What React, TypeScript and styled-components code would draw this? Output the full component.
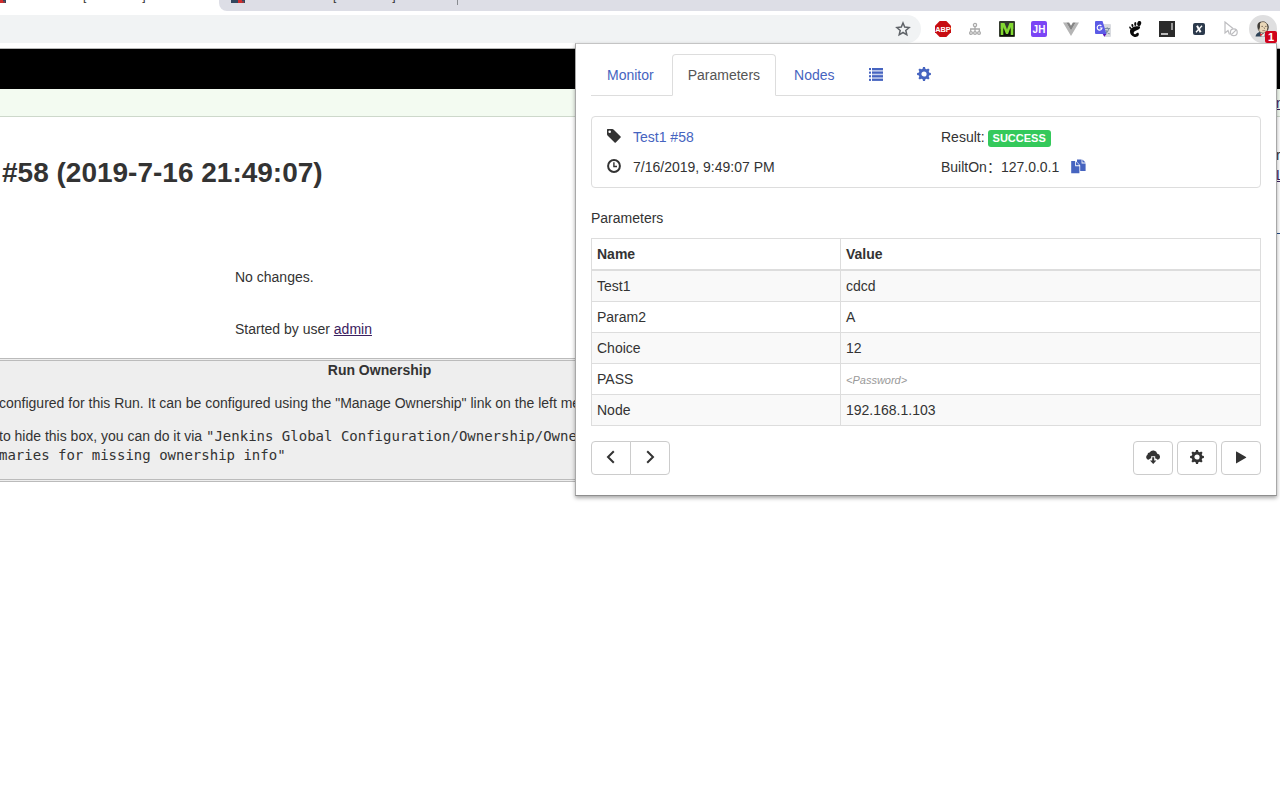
import React from 'react';
import styled, { createGlobalStyle, css } from 'styled-components';

const GlobalStyle = createGlobalStyle`
  *, *::before, *::after { box-sizing: border-box; }
  body {
    margin: 0;
    overflow: hidden;
    background: #fff;
    color: #333;
    font: 14px/20px "Liberation Sans", "Noto Sans CJK SC", sans-serif;
  }
`;

/* ---------- browser window ---------- */

const Browser = styled.div`
  position: relative;
  min-height: 100vh;
  overflow: hidden;
`;

const TabStrip = styled.div`
  display: flex;
  height: 11px;
  background: #fff;
`;

const BrowserTab = styled.div<{ $active?: boolean }>`
  display: flex;
  align-items: flex-end;
  height: 11px;
  padding: 0 0 8px 12px;
  overflow: hidden;
  font: 12px/14px "Liberation Sans", sans-serif;
  ${(p) =>
    p.$active
      ? css`
          flex: 0 0 219px;
          padding-left: 0;
          justify-content: flex-start;
        `
      : css`
          flex: 1;
          background: #dddee6;
          border-bottom-left-radius: 8px;
        `}
`;

const Favicon = styled.svg<{ $clipped?: boolean }>`
  flex: none;
  width: ${(p) => (p.$clipped ? 6 : 14)}px;
  height: 14px;
`;

const TabTitle = styled.span<{ $lead: number }>`
  display: flex;
  gap: 56px;
  padding-left: ${(p) => p.$lead}px;
`;

const TabDivider = styled.span`
  width: 1px;
  height: 12px;
  margin-left: 61px;
  margin-bottom: -2px;
  background: #888b90;
`;

const Toolbar = styled.div`
  display: flex;
  align-items: flex-start;
  gap: 8px;
  height: 38px;
  padding: 4px 3px 0 0;
  border-bottom: 1px solid #b6b6b6;
`;

const AddressBar = styled.div`
  display: flex;
  flex: 1;
  align-items: center;
  justify-content: flex-end;
  height: 28px;
  padding-right: 10px;
  background: #f1f3f4;
  border-radius: 0 14px 14px 0;
`;

const Extensions = styled.div`
  display: flex;
  gap: 4px;
`;

const plainButton = css`
  display: flex;
  align-items: center;
  justify-content: center;
  padding: 0;
  border: 0;
  background: none;
  color: inherit;
  font: inherit;
`;

const StarButton = styled.button`
  ${plainButton}
  width: 16px;
  height: 16px;
`;

const ExtensionButton = styled.button<{ $open?: boolean }>`
  ${plainButton}
  position: relative;
  width: 28px;
  height: 28px;
  border-radius: 50%;
  background: ${(p) => (p.$open ? '#dfdfe0' : 'none')};
`;

const Badge = styled.span`
  position: absolute;
  right: 0;
  bottom: 0;
  z-index: 2;
  width: 12px;
  height: 12px;
  border-radius: 2px;
  background: #d0021b;
  color: #fff;
  font: bold 11px/12px "Liberation Sans", sans-serif;
  text-align: center;
`;

/* ---------- Jenkins page ---------- */

const PageHeader = styled.header`
  height: 40px;
  background: #000;
`;

const Breadcrumbs = styled.nav`
  display: flex;
  align-items: center;
  justify-content: flex-end;
  height: 28px;
  background: #f3fbf1;
  border-bottom: 1px solid #cdd8cb;
`;

const Sliver = styled.span`
  display: block;
  width: 4px;
  overflow: hidden;
  white-space: nowrap;
`;

const PageLink = styled.a`
  color: #3b2160;
  text-decoration: underline;
`;

const BuildPage = styled.main`
  display: flex;
`;

const BuildBody = styled.div`
  flex: 1;
  min-width: 0;
`;

const SideColumn = styled.aside`
  flex: none;
  padding-top: 28px;
`;

const SideRule = styled.hr`
  width: 4px;
  height: 1px;
  margin: 48px 0 0;
  border: 0;
  background: #204a87;
`;

const BuildTitle = styled.h1`
  margin: 0;
  padding: 40px 0 0 2px;
  font-size: 28px;
  line-height: 32px;
`;

const BuildNote = styled.p<{ $gap: number }>`
  margin: ${(p) => p.$gap}px 0 0 235px;
`;

const Ownership = styled.section`
  width: 764px;
  height: 124px;
  margin: 19px 0 0 -1px;
  border: 3px double #bbb;
  border-left: 0;
  background: #eee;
  line-height: 19px;
  white-space: nowrap;
`;

const OwnershipTitle = styled.h2`
  margin: 0;
  font-size: 14px;
  line-height: 19px;
  text-align: center;
`;

const OwnershipText = styled.p`
  margin: 14px 0 0;
`;

const Mono = styled.code`
  font: 14px/19px "DejaVu Sans Mono", monospace;
`;

/* ---------- extension popup ---------- */

const Popup = styled.section`
  position: absolute;
  top: 43px;
  right: 3px;
  width: 702px;
  padding: 10px 15px 20px;
  border: 1px solid #b4b4b4;
  border-color: #c4c4c4 #a8a8a8 #8e8e8e;
  background: #fff;
  box-shadow: 0 2px 4px rgba(0, 0, 0, 0.35);
`;

const Tabs = styled.nav`
  display: flex;
  gap: 2px;
  border-bottom: 1px solid #ddd;
`;

const TabLink = styled.a<{ $active?: boolean }>`
  display: flex;
  align-items: center;
  height: 42px;
  margin-bottom: -1px;
  padding: 0 15px;
  border: 1px solid ${(p) => (p.$active ? '#ddd' : 'transparent')};
  border-bottom-color: ${(p) => (p.$active ? '#fff' : 'transparent')};
  border-radius: 4px 4px 0 0;
  background: ${(p) => (p.$active ? '#fff' : 'none')};
  color: ${(p) => (p.$active ? '#555' : '#4664c0')};
  text-decoration: none;
`;

const Summary = styled.div`
  display: grid;
  grid-template-columns: 1fr 1fr;
  row-gap: 10px;
  margin-top: 20px;
  padding: 10px 0;
  border: 1px solid #ddd;
  border-radius: 4px;
`;

const SummaryItem = styled.div<{ $gap: number }>`
  display: flex;
  align-items: center;
  gap: ${(p) => p.$gap}px;
  height: 20px;
  padding: 0 15px;
`;

const BuildLink = styled.a`
  color: #4664c0;
  text-decoration: none;
`;

const StatusLabel = styled.span`
  height: 17px;
  margin-top: 2px;
  padding: 0 5px;
  border-radius: 3px;
  background: #34c95b;
  color: #fff;
  font: bold 11px/17px "Liberation Sans", sans-serif;
`;

const CopyButton = styled.button`
  ${plainButton}
  margin-left: 12px;
  color: #4664c0;
`;

const SectionTitle = styled.h3`
  margin: 20px 0 10px;
  font-size: 14px;
  font-weight: normal;
  line-height: 20px;
`;

const ParamTable = styled.table`
  width: 100%;
  border-collapse: collapse;
  table-layout: fixed;

  th, td {
    height: 31px;
    padding: 5px;
    border: 1px solid #ddd;
    line-height: 20px;
    text-align: left;
  }
  thead th { border-bottom-width: 2px; }
  thead th:first-child { width: 249px; }
  tbody tr:nth-child(odd) { background: #f9f9f9; }
`;

const Masked = styled.em`
  color: #999;
  font-size: 11px;
  line-height: 11px;
`;

const Actions = styled.div`
  display: flex;
  justify-content: space-between;
  margin-top: 15px;
`;

const ActionGroup = styled.div<{ $joined?: boolean }>`
  display: flex;
  gap: ${(p) => (p.$joined ? 0 : 4)}px;
  ${(p) =>
    p.$joined &&
    css`
      button:first-child { border-radius: 4px 0 0 4px; }
      button:last-child { margin-left: -1px; border-radius: 0 4px 4px 0; }
    `}
`;

const ActionButton = styled.button`
  display: flex;
  align-items: center;
  justify-content: center;
  width: 40px;
  height: 34px;
  padding: 0;
  border: 1px solid #ccc;
  border-radius: 4px;
  background: #fff;
  color: #333;
`;

/* ---------- icons ---------- */

const GlyphSvg = styled.svg`
  display: block;
  flex: none;
  margin-bottom: 2px;
  fill: currentColor;
`;

const Glyph = ({ size = 14, children }: { size?: number; children: React.ReactNode }) => (
  <GlyphSvg width={size} height={size} viewBox={`0 0 ${size} ${size}`} aria-hidden="true">
    {children}
  </GlyphSvg>
);

const ListIcon = () => (
  <Glyph>
    {[1, 4.6, 8.2, 11.8].map((y) => (
      <React.Fragment key={y}>
        <rect x="0" y={y} width="2" height="2.1" />
        <rect x="3" y={y} width="11" height="2.1" />
      </React.Fragment>
    ))}
    <rect x="3" y="3" width="11" height="9" opacity="0.3" />
  </Glyph>
);

const CogIcon = () => (
  <Glyph>
    <circle cx="7" cy="7" r="4" fill="none" stroke="currentColor" strokeWidth="2.8" />
    {[0, 45, 90, 135, 180, 225, 270, 315].map((a) => (
      <path key={a} d="M5.5 2.6 L6 0.1 H8 L8.5 2.6Z" transform={`rotate(${a} 7 7)`} />
    ))}
  </Glyph>
);

const TagIcon = () => (
  <Glyph>
    <path
      fillRule="evenodd"
      d="M0 0.6 Q0 0 0.6 0 H5.4 Q6 0 6.5 0.5 L13.6 7.4 Q14.1 8 13.6 8.6 L8.8 13.4 Q8.2 13.9 7.6 13.4 L0.5 6.4 Q0 5.9 0 5.3Z M2.7 1.4 A1.3 1.3 0 1 0 2.7 4 A1.3 1.3 0 1 0 2.7 1.4Z"
    />
  </Glyph>
);

const ClockIcon = () => (
  <Glyph>
    <circle cx="7" cy="7" r="5.9" fill="none" stroke="currentColor" strokeWidth="2" />
    <path d="M6.2 3.2 H7.6 V6.8 H10 V8.2 H6.2Z" />
  </Glyph>
);

const CopyIcon = () => (
  <Glyph size={15}>
    <path d="M6 0.4 H10.6 V4.4 H14.6 V12 H9.2 V6.2 L6 3Z" />
    <path d="M11.4 0.4 L14.6 3.6 H11.4Z" />
    <path d="M0.2 2 H4.2 V7.2 H8.4 V14.2 H0.2Z" />
    <path d="M5 2.6 L8.4 6.3 H5Z" />
  </Glyph>
);

const ChevronLeft = () => (
  <Glyph>
    <path d="M9.8 1.2 L4 7 L9.8 12.8" fill="none" stroke="currentColor" strokeWidth="2" />
  </Glyph>
);

const ChevronRight = () => (
  <Glyph>
    <path d="M4.2 1.2 L10 7 L4.2 12.8" fill="none" stroke="currentColor" strokeWidth="2" />
  </Glyph>
);

const CloudDownloadIcon = () => (
  <Glyph>
    <path d="M2.6 9.8 A2.7 2.7 0 0 1 1.5 4.8 A2.1 2.1 0 0 1 3.6 2.6 A4.2 4.2 0 0 1 11.3 3.7 A3.1 3.1 0 0 1 11.6 9.8 L10 8.4 H9.2 V6.2 H5.2 V8.4 H4.2Z" />
    <path d="M6.2 7.2 H8.2 V10.4 H10.4 L7.2 14 L4 10.4 H6.2Z" />
  </Glyph>
);

const PlayIcon = () => (
  <Glyph>
    <path d="M2 1.8 Q2 1.2 2.5 1.5 L12 7.1 Q12.5 7.4 12 7.7 L2.5 13.3 Q2 13.6 2 13Z" />
  </Glyph>
);

const StarIcon = () => (
  <svg width="16" height="16" viewBox="0 0 16 16" aria-hidden="true">
    <path
      d="M8 2 L9.7 6.1 L14.1 6.5 L10.8 9.4 L11.8 13.8 L8 11.5 L4.2 13.8 L5.2 9.4 L1.9 6.5 L6.3 6.1Z"
      fill="none"
      stroke="#5f6368"
      strokeWidth="1.5"
    />
  </svg>
);

const svgFont = '"Liberation Sans", sans-serif';

const AbpArt = () => (
  <>
    <path d="M4.7 0 H11.3 L16 4.7 V11.3 L11.3 16 H4.7 L0 11.3 V4.7Z" fill="#c70d12" />
    <text x="8" y="10.7" textAnchor="middle" fontFamily={svgFont} fontWeight="bold" fontSize="7.4" fill="#fff">ABP</text>
  </>
);

const SitemapArt = () => (
  <g fill="none" stroke="#aaa" strokeWidth="1.3">
    <circle cx="8" cy="4" r="1.6" />
    <path d="M8 5.6 V11 M3.7 10.5 V8 H12.3 V10.5" />
    <circle cx="4" cy="12" r="1.4" />
    <circle cx="8" cy="12" r="1.4" />
    <circle cx="12" cy="12" r="1.4" />
  </g>
);

const MArt = () => (
  <>
    <rect width="16" height="16" rx="1" fill="#333a2e" />
    <rect x="1" y="8" width="14" height="7" fill="#0d100b" />
    <path d="M1.7 14 V2 H5.5 L8 8.5 L10.5 2 H14.3 V14 H11.7 V6 L9 13 H7 L4.3 6 V14Z" fill="#83d932" />
  </>
);

const JhArt = () => (
  <>
    <rect width="16" height="16" rx="2" fill="#7b45f5" />
    <text x="8" y="11.8" textAnchor="middle" fontFamily={svgFont} fontWeight="bold" fontSize="10" fill="#fff">JH</text>
  </>
);

const VueArt = () => (
  <>
    <path d="M0 1.5 H3.3 L8 9.5 L12.7 1.5 H16 L8 15Z" fill="#b5b5b5" />
    <path d="M3.3 1.5 H6.1 L8 4.8 L9.9 1.5 H12.7 L8 9.5Z" fill="#858585" />
  </>
);

const TranslateArt = () => (
  <>
    <path d="M7 3 H15 Q16 3 16 4 V15 Q16 16 15 16 H9Z" fill="#d9dbe0" />
    <path d="M9.5 7.5 H15 M12.2 6.2 V7.5 M14 7.5 Q13 11 10 13 M10.7 9 Q12 11.5 14.6 13" stroke="#7f93a0" strokeWidth="1.1" fill="none" />
    <path d="M1 0 H7.5 L11.5 13 H1 Q0 13 0 12 V1 Q0 0 1 0Z" fill="#5b5be6" />
    <path d="M7.8 13 H11.5 L9.3 15.8Z" fill="#5a12b5" />
    <path d="M6.4 5 A2.4 2.4 0 1 0 7 7 H4.8" stroke="#fff" strokeWidth="1.2" fill="none" />
  </>
);

const GnomeArt = () => (
  <g fill="#0a0a0a">
    <path d="M13 5.6 C9 4.6 3.2 6 3 10 C2.8 13.5 5.8 16 8.6 16 C11.2 16 12.4 13.8 11.6 12.3 C10.9 11.1 9.6 12.3 8.7 13 C7.4 13.9 6 12.3 7 11 C8.6 9 13.8 9 13 5.6Z" />
    <ellipse cx="12.2" cy="2.5" rx="1.9" ry="2.6" transform="rotate(20 12.2 2.5)" />
    <ellipse cx="8.3" cy="3" rx="1.1" ry="1.9" />
    <ellipse cx="5.4" cy="4.5" rx="1" ry="1.6" transform="rotate(-15 5.4 4.5)" />
    <ellipse cx="3.1" cy="6.7" rx="0.8" ry="1.3" transform="rotate(-25 3.1 6.7)" />
  </g>
);

const PanelArt = () => (
  <>
    <rect width="16" height="16" fill="#2b2b2b" />
    <rect x="12" y="2" width="2" height="7" fill="#999" />
    <rect x="2" y="12" width="7" height="2" fill="#bbb" />
  </>
);

const XArt = () => (
  <>
    <rect x="2" y="2" width="12" height="12" rx="2" fill="#2c3a4c" />
    <path d="M6 4.8 L9.6 11.2" stroke="#fff" strokeWidth="2" />
    <path d="M11 4.8 L5 11.2" stroke="#fff" strokeWidth="1.3" />
  </>
);

const CursorArt = () => (
  <g fill="none" stroke="#bdbdc0" strokeWidth="1.2">
    <path d="M6.5 13.5 L5 9.5 L2 12 V1 L10 7.5" />
    <circle cx="10.8" cy="11.2" r="3.4" />
    <path d="M8.5 13.5 L13.2 8.9" />
  </g>
);

const ButlerArt = () => (
  <>
    <path d="M0.5 15.5 Q1 12 4.5 11 H11 Q14 12 14.5 15.5Z" fill="#2d4257" />
    <ellipse cx="8" cy="6.4" rx="5" ry="5.8" fill="#e9d7b8" stroke="#4a443c" strokeWidth="0.7" />
    <path d="M3 8 Q0.8 2 6 0.6 Q4.3 3 5 6 L4.2 9Z" fill="#3f3b36" />
    <path d="M12.4 3 Q14 6 12.5 9.4" stroke="#4a443c" strokeWidth="1" fill="none" />
    <path d="M6.4 5.4 H8 M10 5.4 H11.6 M9 6.4 L9.6 7.8" stroke="#59493c" strokeWidth="0.7" fill="none" />
    <path d="M7.4 9.6 H10.4" stroke="#8d6a55" strokeWidth="0.7" />
    <path d="M5.5 11.5 L8 13 L10 11.6 L9.5 15.5 H6.5Z" fill="#f4f1ea" />
    <path d="M5 12.2 L8 13.5 L5 15.2Z" fill="#c62b36" />
  </>
);

const extensions: { name: string; Art: () => React.ReactElement }[] = [
  { name: 'Adblock Plus', Art: AbpArt },
  { name: 'Site map', Art: SitemapArt },
  { name: 'Markdown', Art: MArt },
  { name: 'JSON Handle', Art: JhArt },
  { name: 'Vue devtools', Art: VueArt },
  { name: 'Translate', Art: TranslateArt },
  { name: 'GNOME Shell', Art: GnomeArt },
  { name: 'Window resizer', Art: PanelArt },
  { name: 'XPath', Art: XArt },
  { name: 'Allow select', Art: CursorArt },
];

const parameters: { name: string; value: React.ReactNode }[] = [
  { name: 'Test1', value: 'cdcd' },
  { name: 'Param2', value: 'A' },
  { name: 'Choice', value: '12' },
  { name: 'PASS', value: <Masked>&lt;Password&gt;</Masked> },
  { name: 'Node', value: '192.168.1.103' },
];

const JenkinsFavicon = ({ clipped }: { clipped?: boolean }) => (
  <Favicon $clipped={clipped} viewBox={clipped ? '8 0 6 14' : '0 0 14 14'} aria-hidden="true">
    <rect y="9" width="14" height="5" fill="#33475e" />
    <rect x="7" y="10" width="4" height="4" fill="#d22d2d" />
    <rect x="11" y="12" width="2" height="2" fill="#8a3b45" />
  </Favicon>
);

export default function App() {
  return (
    <Browser>
      <GlobalStyle />
      <TabStrip>
        <BrowserTab $active>
          <JenkinsFavicon clipped />
          <TabTitle $lead={77}><span>[</span><span>]</span></TabTitle>
        </BrowserTab>
        <BrowserTab>
          <JenkinsFavicon />
          <TabTitle $lead={88}><span>[</span><span>]</span></TabTitle>
          <TabDivider />
        </BrowserTab>
      </TabStrip>
      <Toolbar>
        <AddressBar>
          <StarButton aria-label="Bookmark this page"><StarIcon /></StarButton>
        </AddressBar>
        <Extensions>
          {extensions.map(({ name, Art }) => (
            <ExtensionButton key={name} aria-label={name}>
              <svg width="16" height="16" viewBox="0 0 16 16" aria-hidden="true"><Art /></svg>
            </ExtensionButton>
          ))}
          <ExtensionButton $open aria-label="Jenkins notifier">
            <svg width="16" height="16" viewBox="0 0 16 16" aria-hidden="true"><ButlerArt /></svg>
            <Badge>1</Badge>
          </ExtensionButton>
        </Extensions>
      </Toolbar>

      <PageHeader />
      <Breadcrumbs>
        <Sliver><PageLink href="#refresh">n</PageLink></Sliver>
      </Breadcrumbs>
      <BuildPage>
        <BuildBody>
          <BuildTitle>#58 (2019-7-16 21:49:07)</BuildTitle>
          <BuildNote $gap={78}>No changes.</BuildNote>
          <BuildNote $gap={32}>
            Started by user <PageLink href="#admin">admin</PageLink>
          </BuildNote>
          <Ownership>
            <OwnershipTitle>Run Ownership</OwnershipTitle>
            <OwnershipText>
              configured for this Run. It can be configured using the "Manage Ownership" link on the left menu
            </OwnershipText>
            <OwnershipText>
              to hide this box, you can do it via <Mono>"Jenkins Global Configuration/Ownership/Owner</Mono>
              <br />
              <Mono>maries for missing ownership info"</Mono>
            </OwnershipText>
          </Ownership>
        </BuildBody>
        <SideColumn>
          <Sliver>r</Sliver>
          <Sliver><PageLink href="#log">L</PageLink></Sliver>
          <SideRule />
        </SideColumn>
      </BuildPage>

      <Popup>
        <Tabs>
          <TabLink href="#monitor">Monitor</TabLink>
          <TabLink href="#parameters" $active>Parameters</TabLink>
          <TabLink href="#nodes">Nodes</TabLink>
          <TabLink href="#jobs" aria-label="Jobs"><ListIcon /></TabLink>
          <TabLink href="#options" aria-label="Options"><CogIcon /></TabLink>
        </Tabs>
        <Summary>
          <SummaryItem $gap={12}>
            <TagIcon />
            <BuildLink href="#build">Test1 #58</BuildLink>
          </SummaryItem>
          <SummaryItem $gap={3}>
            <span>Result:</span>
            <StatusLabel>SUCCESS</StatusLabel>
          </SummaryItem>
          <SummaryItem $gap={12}>
            <ClockIcon />
            <span>7/16/2019, 9:49:07 PM</span>
          </SummaryItem>
          <SummaryItem $gap={0}>
            <span>BuiltOn：127.0.0.1</span>
            <CopyButton aria-label="Copy"><CopyIcon /></CopyButton>
          </SummaryItem>
        </Summary>
        <SectionTitle>Parameters</SectionTitle>
        <ParamTable>
          <thead>
            <tr><th scope="col">Name</th><th scope="col">Value</th></tr>
          </thead>
          <tbody>
            {parameters.map((p) => (
              <tr key={p.name}><td>{p.name}</td><td>{p.value}</td></tr>
            ))}
          </tbody>
        </ParamTable>
        <Actions>
          <ActionGroup $joined>
            <ActionButton aria-label="Previous build"><ChevronLeft /></ActionButton>
            <ActionButton aria-label="Next build"><ChevronRight /></ActionButton>
          </ActionGroup>
          <ActionGroup>
            <ActionButton aria-label="Load parameters"><CloudDownloadIcon /></ActionButton>
            <ActionButton aria-label="Configure"><CogIcon /></ActionButton>
            <ActionButton aria-label="Run build"><PlayIcon /></ActionButton>
          </ActionGroup>
        </Actions>
      </Popup>
    </Browser>
  );
}
